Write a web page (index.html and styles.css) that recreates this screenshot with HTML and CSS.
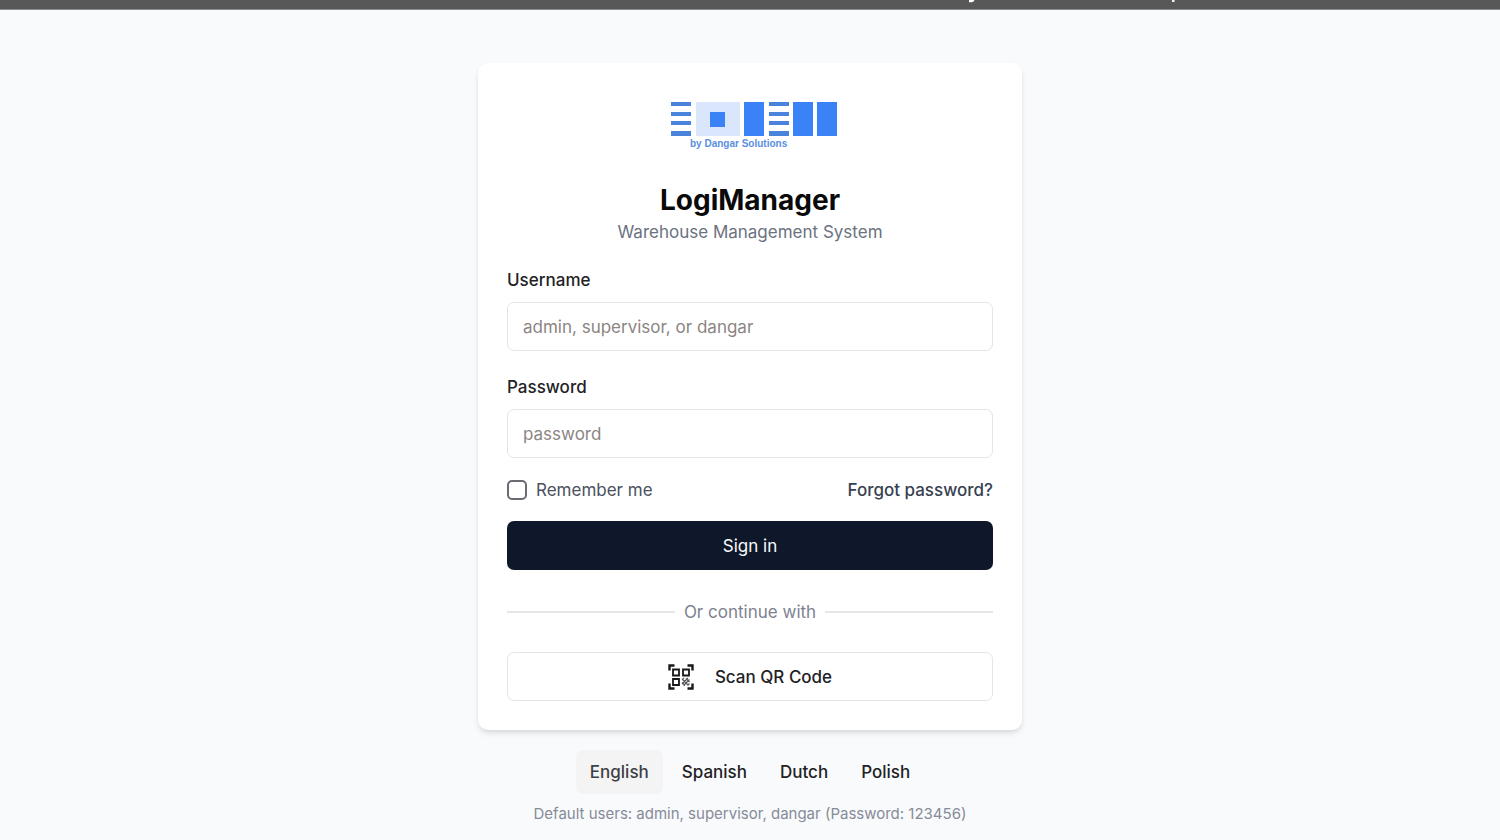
FILE: index.html
```
<!DOCTYPE html>
<html lang="en">
<head>
<meta charset="utf-8">
<meta name="viewport" content="width=device-width, initial-scale=1">
<title>LogiManager</title>
<link rel="stylesheet" href="styles.css">
</head>
<body>
<div class="banner">
  <svg class="banner-marks" viewBox="0 0 206 3" width="206" height="3" aria-hidden="true">
    <path d="M0 0H5.500Q4.500 2.200 2.500 2.300H0Z" fill="#fff"/>
    <path d="M203 0h2.500v2H203z" fill="#f2f2f2"/>
  </svg>
</div>
<main class="page">
  <section class="card">
    <header class="brand">
      <svg class="logo" viewBox="0 0 166 50" width="166" height="50" role="img" aria-label="by Dangar Solutions">
        <g fill="#4a83dc">
          <path d="M0 1h20v4H0zM0 11h20v4H0zM0 20h20v4H0zM0 30h20v5H0z"/>
          <path d="M98 1h20v4H98zM98 11h20v4H98zM98 20h20v4H98zM98 30h20v5H98z"/>
        </g>
        <path d="M25 1h44v34H25z" fill="#dae6fb"/>
        <path d="M39 11h15v15H39zM73 1h20v34H73zM122 1h20v34h-20zM146 1h20v34h-20z" fill="#3b82f6"/>
        <text class="logo-text" x="19" y="46">by Dangar Solutions</text>
      </svg>
      <h1 class="title">LogiManager</h1>
      <p class="subtitle">Warehouse Management System</p>
    </header>
    <form class="form">
      <div class="field">
        <label class="label" for="username">Username</label>
        <input class="input" id="username" type="text" placeholder="admin, supervisor, or dangar">
      </div>
      <div class="field">
        <label class="label" for="password">Password</label>
        <input class="input" id="password" type="password" placeholder="password">
      </div>
      <div class="options">
        <input class="checkbox" id="remember" type="checkbox">
        <label class="remember" for="remember">Remember me</label>
        <a class="forgot" href="#">Forgot password?</a>
      </div>
      <button class="button primary" type="submit">Sign in</button>
    </form>
    <div class="divider">Or continue with</div>
    <button class="button outline" type="button">
      <svg viewBox="0 0 26 26" width="26" height="26" fill="none" stroke="#18181b" aria-hidden="true">
        <path stroke-width="2.400" d="M1.500 6.500v-5h5M19.500 1.500h5v5M1.500 19.500v5h5M24.500 19.500v5h-5"/>
        <path stroke-width="1.800" d="M5 5.500h6v6H5zM15 5.500h6v6H15zM5 15h6v6H5z"/>
        <path stroke-width="1.200" stroke="#55555a" d="M14 16l2-2M14 20l6-6M15.500 21.500l6-6M19.500 21.500l2-2M15 16l5.500 5.500M18 14.500l3.500 3.500M14 18.500l3 3"/>
      </svg>
      Scan QR Code
    </button>
  </section>
  <nav class="languages" aria-label="Language">
    <button class="language active" type="button">English</button>
    <button class="language" type="button">Spanish</button>
    <button class="language" type="button">Dutch</button>
    <button class="language" type="button">Polish</button>
  </nav>
  <p class="hint">Default users: admin, supervisor, dangar (Password: 123456)</p>
</main>
</body>
</html>
```
FILE: styles.css
```
* {
  box-sizing: border-box;
}

body {
  margin: 0;
  background: #f9fafc;
  color: #222225;
  font: 17px/24px Inter, "Liberation Sans", sans-serif;
}

h1,
p {
  margin: 0;
}

button,
input {
  font: inherit;
  color: inherit;
}

.banner {
  height: 10px;
  padding-left: 64.6%;
  background: #585858;
  border-bottom: 1px solid #8a8a8a;
  overflow: hidden;
}

.banner-marks {
  display: block;
}

.page {
  display: flex;
  flex-direction: column;
  align-items: center;
  padding: 53px 16px 16px;
}

.card {
  width: 100%;
  max-width: 544px;
  padding: 29px;
  background: #fff;
  border-radius: 10px;
  box-shadow: 0 4px 7px -1px rgba(0, 0, 0, 0.1), 0 2px 5px -2px rgba(0, 0, 0, 0.1);
}

.brand {
  display: flex;
  flex-direction: column;
  align-items: center;
  padding-top: 9px;
}

.logo {
  margin-left: 8px;
}

.logo-text {
  fill: #5b8fe0;
  font: bold 10px "Liberation Sans", Arial, sans-serif;
}

.title {
  margin-top: 31px;
  color: #0a0a0a;
  font-size: 28px;
  line-height: 36px;
  font-weight: 700;
}

.subtitle {
  margin-top: 2px;
  color: #6b7280;
}

.form {
  display: flex;
  flex-direction: column;
  margin-top: 24px;
}

.field {
  display: flex;
  flex-direction: column;
  gap: 10px;
  margin-bottom: 24px;
}

.label {
  font-weight: 500;
}

.input {
  width: 100%;
  height: 49px;
  padding: 0 15px;
  border: 1px solid #e5e5e5;
  border-radius: 7px;
  background: #fff;
}

.input::placeholder {
  color: #8b8583;
  opacity: 1;
}

.options {
  display: flex;
  align-items: center;
  gap: 9px;
  margin: -4px 0 19px;
}

.checkbox {
  appearance: none;
  width: 20px;
  height: 20px;
  margin: 0;
  border: 2px solid #6b6b73;
  border-radius: 5px;
  background: #fff;
}

.checkbox:checked {
  background: #0f172a;
}

.remember {
  color: #4b5160;
}

.forgot {
  margin-left: auto;
  color: #374151;
  font-weight: 500;
  text-decoration: none;
}

.button {
  display: flex;
  align-items: center;
  justify-content: center;
  gap: 21px;
  width: 100%;
  height: 49px;
  border-radius: 7px;
}

.primary {
  border: 0;
  background: #0f172a;
  color: #f8fafc;
}

.outline {
  border: 1px solid #e5e5e5;
  background: #fff;
  font-weight: 500;
}

.divider {
  display: flex;
  align-items: center;
  gap: 9px;
  margin: 30px 0 28px;
  color: #7d8290;
}

.divider::before,
.divider::after {
  content: "";
  flex: 1;
  height: 2px;
  background: #e5e5ea;
}

.languages {
  display: flex;
  gap: 5px;
  margin-top: 20px;
}

.language {
  height: 44px;
  padding: 0 14px;
  border: 0;
  border-radius: 7px;
  background: transparent;
  font-weight: 500;
}

.active {
  background: #f4f4f5;
  color: #3f3f46;
}

.hint {
  margin-top: 8px;
  color: #868b98;
  font-size: 15px;
  text-align: center;
}
```
